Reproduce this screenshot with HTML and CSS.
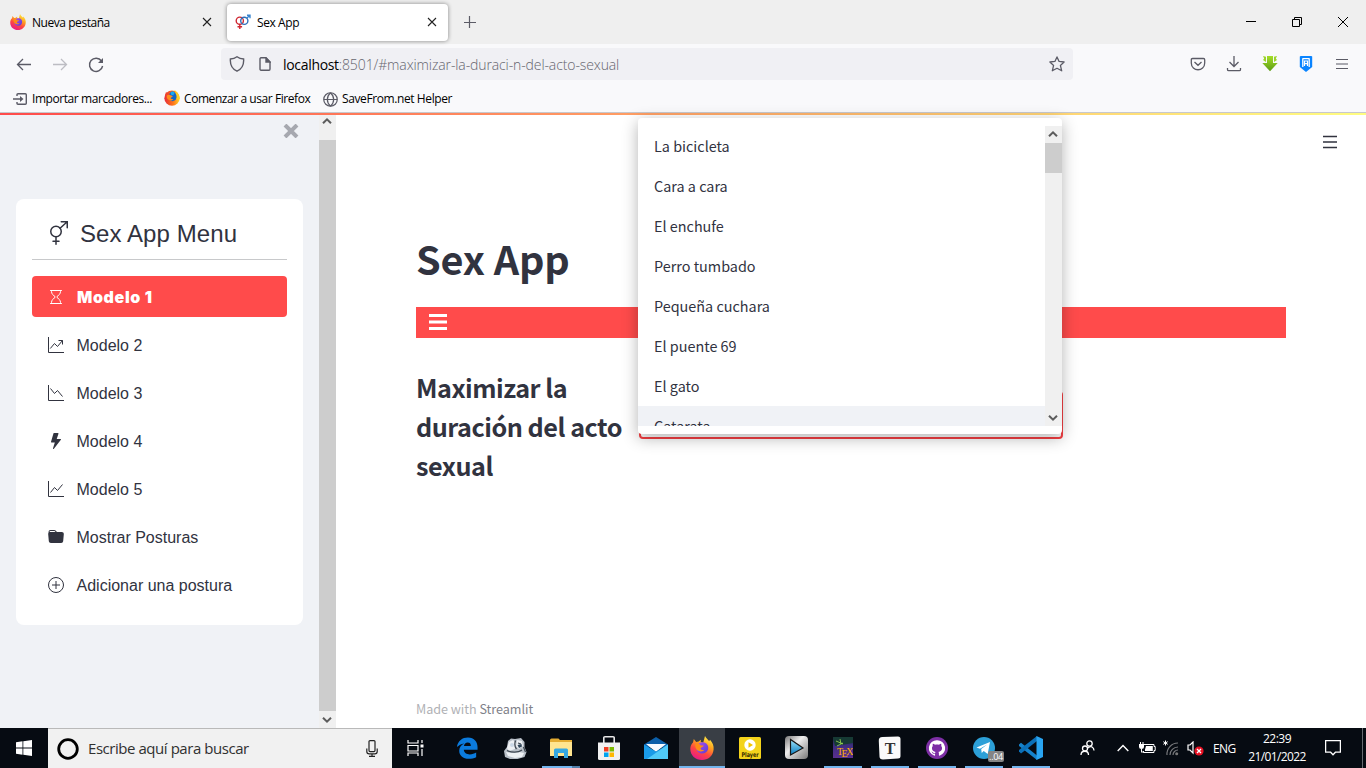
FILE: index.html
```html
<!DOCTYPE html>
<html lang="es">
<head>
<meta charset="utf-8">
<title>Sex App</title>
<link rel="stylesheet" href="styles.css">
</head>
<body>
<svg class="defs" width="0" height="0">
  <defs>
    <linearGradient id="ffBody" x1=".8" y1="0" x2=".3" y2="1"><stop offset="0" stop-color="#fff44f"/><stop offset=".35" stop-color="#ffa61e"/><stop offset=".65" stop-color="#ff4740"/><stop offset="1" stop-color="#e5198a"/></linearGradient>
    <linearGradient id="ffCore" x1="0" y1="0" x2="1" y2="1"><stop offset="0" stop-color="#a84df5"/><stop offset="1" stop-color="#5b3fd0"/></linearGradient>
    <linearGradient id="ffOld" x1="0" y1="0" x2="1" y2="0"><stop offset="0" stop-color="#e62b3a"/><stop offset=".6" stop-color="#ff7a18"/><stop offset="1" stop-color="#ffd52b"/></linearGradient>
    <linearGradient id="metal" x1="0" y1="0" x2="1" y2="1"><stop offset="0" stop-color="#777"/><stop offset=".4" stop-color="#eee"/><stop offset="1" stop-color="#777"/></linearGradient>
    <linearGradient id="play" x1="0" y1="0" x2="0" y2="1"><stop offset="0" stop-color="#9fe4fa"/><stop offset="1" stop-color="#087cc0"/></linearGradient>
    <linearGradient id="green" x1="0" y1="0" x2="0" y2="1"><stop offset="0" stop-color="#a5de28"/><stop offset="1" stop-color="#5c9c14"/></linearGradient>
    <linearGradient id="tex" x1="0" y1="0" x2="0" y2="1"><stop offset="0" stop-color="#173530"/><stop offset=".4" stop-color="#3d2c80"/><stop offset="1" stop-color="#5a2f8e"/></linearGradient>
    <symbol id="firefox" viewBox="0 0 24 24">
      <path fill="url(#ffBody)" d="M3 6.500 3.800 3l2.400 3 2.400-.4 2.200-1.800v2.300l2.400.6L15 0c1 2.300 3 3.500 4.200 5.300L20 3.700C22.600 6.600 24 9.700 23.600 13.500 23 20 18 24 12 24 5.500 24 .3 19.500.3 12.700.3 10.200 1.400 8 3 6.500z"/>
      <path fill="url(#ffCore)" d="M7 9.500C8.600 7 11.500 5.700 14.300 6.500c3.200 1 4.700 4.200 3.600 7.200-1 3-4.500 4.600-7.600 3.600C7.500 16.400 6 14 6.300 11.600z"/>
      <path fill="#ff8b16" d="M5.500 7.500c2-.8 4.500.2 5.200 2h3c-.2 1.700-2.700 1.500-3.200 2.700 0 1.600 1.600 2.200 3.800 1.600-1 2-5 2.200-7.300.2C5.300 12.200 5 9.700 5.500 7.500z"/>
    </symbol>
    <symbol id="firefoxOld" viewBox="0 0 24 24">
      <circle cx="12" cy="12.300" r="11.500" fill="url(#ffOld)"/>
      <path fill="#f0452b" d="M1.500 8 3 3l3.500 3.500L10 5v4z"/>
      <path fill="#ffce24" d="M15.500 0c5 3 8.500 8 8 14h-5C19 8 18 4 15.500 0z"/>
      <path fill="#1467c8" d="M8.500 5C10.500 2 14 1.500 16.500 4c3 3.500 3 9 0 11.500-3 2-7 1.500-8.500-1.500z"/>
      <path fill="#19a9f0" d="M10 3.500c2-1.800 4.500-1.500 6 .5l-2 4-3.500-1z"/>
      <path fill="#ff8f1c" d="M4 8.500c2-2 4.500-1.800 6-.5l3 1c0 2-2.500 1.800-3 3 .3 1.600 2 2 4 1.400-1.500 3-6 3-8.300.6C4.500 12.500 4 10.500 4 8.500z"/>
    </symbol>
    <symbol id="up" viewBox="0 0 10 8"><path d="M1 6.300 5 2.300l4 4" fill="none" stroke="#5c5c5c" stroke-width="2"/></symbol>
    <symbol id="down" viewBox="0 0 10 8"><path d="M1 1.700l4 4 4-4" fill="none" stroke="#5c5c5c" stroke-width="2"/></symbol>
    <symbol id="cross" viewBox="0 0 10 10"><path d="M1 1l8 8M9 1 1 9" fill="none" stroke="currentColor" stroke-width="1.100"/></symbol>
  </defs>
</svg>

<div class="screen">
  <header class="browser">
    <div class="tabs">
      <div class="tab">
        <svg class="fav" width="16" height="16"><use href="#firefox"/></svg>
        <span class="tab-title seg t-new">Nueva pestaña</span>
        <svg class="tab-x" width="10" height="10"><use href="#cross"/></svg>
      </div>
      <div class="tab tab-active">
        <svg class="fav" width="16" height="16" viewBox="0 0 16 16" fill="none"><circle cx="4.800" cy="6.700" r="3.600" stroke="#cf2630" stroke-width="1.400"/><path d="M4.800 10.300v4.700M2.500 12.700h4.600" stroke="#cf2630" stroke-width="1.400"/><circle cx="9.300" cy="6.800" r="3.600" stroke="#2d70bb" stroke-width="1.400"/><path d="M11.800 4.200 14.500 1.500M12 1.200h3v3" stroke="#3a86d0" stroke-width="1.400"/></svg>
        <span class="tab-title seg t-app">Sex App</span>
        <svg class="tab-x" width="10" height="10"><use href="#cross"/></svg>
      </div>
      <svg class="plus" width="12" height="12" viewBox="0 0 12 12"><path d="M5.500 0v12M0 6.500h12" stroke="#5b5b66" stroke-width="1.200"/></svg>
      <div class="win">
        <svg width="10" height="10" viewBox="0 0 10 10"><path d="M0 4.500h10" stroke="#000"/></svg>
        <svg width="10" height="10" viewBox="0 0 10 10" fill="none" stroke="#000"><path d="M.5 2.500h7v7h-7zM2.500 2.500v-2h7v7h-2"/></svg>
        <svg width="10" height="10" viewBox="0 0 10 10"><path d="M0 0l10 10M10 0 0 10" stroke="#000"/></svg>
      </div>
    </div>

    <div class="nav">
      <div class="nav-left">
        <svg width="16" height="16" viewBox="0 0 16 16" fill="none" stroke="#5b5b66" stroke-width="1.300"><path d="M15 7.500H1.500M7 2 1.500 7.500 7 13"/></svg>
        <svg width="16" height="16" viewBox="0 0 16 16" fill="none" stroke="#bdbdc3" stroke-width="1.300"><path d="M1 7.500h13.500M9 2l5.500 5.500L9 13"/></svg>
        <svg width="16" height="16" viewBox="0 0 16 16" fill="none" stroke="#5b5b66" stroke-width="1.400"><path d="M13.500 4A6.600 6.600 0 1 0 14.600 9"/><path d="M15 1v5h-5z" fill="#5b5b66" stroke="none"/></svg>
      </div>
      <div class="url">
        <svg width="16" height="16" viewBox="0 0 16 16" fill="none" stroke="#5b5b66" stroke-width="1.400"><path d="M8 .8c2 1.600 4.200 2.200 6.600 2.200C15 8 13 13 8 15.200 3 13 1 8 1.400 3 3.800 3 6 2.400 8 .8z"/></svg>
        <svg class="doc" width="12" height="14" viewBox="0 0 12 14" fill="none" stroke="#5b5b66" stroke-width="1.400"><path d="M1 2Q1 .8 2 .8h5L11 5v7q0 1.200-1 1.200H2Q1 13.200 1 12z"/><path d="M7 1v4h4z" fill="#5b5b66"/></svg>
        <span class="address"><span class="host">localhost</span>:8501/#maximizar-la-duraci-n-del-acto-sexual</span>
        <svg class="star" width="16" height="16" viewBox="0 0 16 16" fill="none" stroke="#5b5b66" stroke-width="1.300" stroke-linejoin="round"><path d="M8 .9l2.100 4.500 5 .6-3.700 3.400 1.300 5.400L8 12.300l-4.700 2.500 1.300-5.400L.9 6l5-.6z"/></svg>
      </div>
      <div class="nav-right">
        <svg width="16" height="16" viewBox="0 0 16 16" fill="none" stroke="#5b5b66" stroke-width="1.300"><path d="M2.500 2.500h11q1.200 0 1.200 1.200V7c0 9-13.400 9-13.400 0V3.700q0-1.200 1.200-1.200zM4.500 6 8 9.300 11.500 6"/></svg>
        <svg width="16" height="16" viewBox="0 0 16 16" fill="none" stroke="#5b5b66" stroke-width="1.300"><path d="M8 0v10.500M3.500 6 8 10.500 12.500 6M1.500 12v1.500q0 1.200 1.200 1.200h10.600q1.200 0 1.200-1.200V12"/></svg>
        <svg width="16" height="16" viewBox="0 0 16 16"><path fill="url(#green)" d="M5 0h6v7h4.700L8 15.300.3 7H5z"/><path fill="#9bd32a" d="M1 0l3 .8V6L1 4l1.200-1.500zM15 0l-3 .8V6l3-2-1.200-1.500z"/></svg>
        <svg width="16" height="16" viewBox="0 0 16 16"><path fill="#0a84ff" d="M2.500 0h11l.7.700V11L8 16l-6.200-5V.700z"/><path d="M4.800 11V2.200M11.200 11V2.200M4.800 2.700h6.400" stroke="#fff" stroke-width="1.300" fill="none"/><path d="M6.500 10V5h3v5M6.500 7.700h3" stroke="#fff" stroke-width="1.200" fill="none"/></svg>
        <svg width="12" height="12" viewBox="0 0 12 12"><path d="M0 1.500h12M0 6h12M0 10.500h12" stroke="#5b5b66" stroke-width="1.200"/></svg>
      </div>
    </div>

    <div class="marks seg">
      <svg width="14" height="12" viewBox="0 0 14 12" fill="none" stroke="#5b5b66" stroke-width="1.400"><path d="M4 3V1.700Q4 .7 5 .7h7.300q1 0 1 1v8.600q0 1-1 1H5q-1 0-1-1V9M0 6h8"/><path d="M7 3l3.500 3L7 9z" fill="#5b5b66" stroke="none"/></svg>
      <span class="m-one">Importar marcadores...</span>
      <svg class="old" width="16" height="16"><use href="#firefoxOld"/></svg>
      <span class="m-two">Comenzar a usar Firefox</span>
      <svg width="15" height="15" viewBox="0 0 16 16" fill="none" stroke="#5b5b66" stroke-width="1.300"><circle cx="8" cy="8" r="7.200"/><path d="M.8 8h14.400M8 .8C3.500 5 3.500 11 8 15.200M8 .8c4.500 4.200 4.500 10.200 0 14.400"/></svg>
      <span class="m-three">SaveFrom.net Helper</span>
    </div>
  </header>

  <div class="stripe"></div>

  <div class="page">
    <aside class="side">
      <div class="side-top">
        <svg width="16" height="14" viewBox="0 0 16 14"><path d="M2 1l12 12M14 1 2 13" stroke="#a6a8af" stroke-width="4"/></svg>
      </div>
      <nav class="menu">
        <div class="menu-title">
          <svg width="24" height="24" viewBox="0 0 16 16" fill="none" stroke="#31333f" stroke-linecap="round"><circle cx="8" cy="7" r="3.500"/><path d="M8 10.500v5M6 13.500h4M10.700 4.800 15.300.7M11.500.5h4v4"/></svg>
          <span>Sex App Menu</span>
        </div>
        <ul>
          <li class="on"><svg width="16" height="16" viewBox="0 0 16 16" fill="none" stroke="currentColor" stroke-linecap="round"><path d="M2.500 1.500h11M2.500 14.500h11M3.500 1.500v1c0 2.500 2 4 3.500 5v1c-1.500 1-3.500 2.500-3.500 5v1M12.500 1.500v1c0 2.500-2 4-3.500 5v1c1.500 1 3.500 2.500 3.500 5v1"/></svg><span>Modelo 1</span></li>
          <li><svg width="16" height="16" viewBox="0 0 16 16" fill="none" stroke="currentColor"><path d="M.5 0v15.500H16M2.300 11.500l4.200-5 3 3 5-6M10.500 3.500h4v4"/></svg><span>Modelo 2</span></li>
          <li><svg width="16" height="16" viewBox="0 0 16 16" fill="none" stroke="currentColor"><path d="M.5 0v15.500H16M2.500 3.500l4 5 3-3 5 6"/></svg><span>Modelo 3</span></li>
          <li><svg width="16" height="16" viewBox="0 0 16 16" fill="currentColor"><path d="M5.520.36A.5.500 0 0 1 6 0h4a.5.500 0 0 1 .474.658L8.694 6H12.500a.5.500 0 0 1 .395.807l-7 9a.5.500 0 0 1-.873-.454L6.823 9.500H3.500a.5.500 0 0 1-.48-.64l2.500-8.500z"/></svg><span>Modelo 4</span></li>
          <li><svg width="16" height="16" viewBox="0 0 16 16" fill="none" stroke="currentColor"><path d="M.5 0v15.500H16M2.500 11.500l4-5 3 3 5-6"/></svg><span>Modelo 5</span></li>
          <li><svg width="16" height="16" viewBox="0 0 16 16" fill="currentColor"><path d="M9.828 3h3.982a2 2 0 0 1 1.992 2.181l-.637 7A2 2 0 0 1 13.174 14H2.825a2 2 0 0 1-1.991-1.819l-.637-7a2 2 0 0 1 .342-1.310L.500 3a2 2 0 0 1 2-2h3.672a2 2 0 0 1 1.414.586l.828.828A2 2 0 0 0 9.828 3zm-8.322.120C1.720 3.042 1.950 3 2.190 3h5.396l-.707-.707A1 1 0 0 0 6.172 2H2.500a1 1 0 0 0-1 .981l.006.139z"/></svg><span>Mostrar Posturas</span></li>
          <li><svg width="16" height="16" viewBox="0 0 16 16" fill="none" stroke="currentColor"><circle cx="8" cy="8" r="7.500"/><path d="M8 4v8M4 8h8"/></svg><span>Adicionar una postura</span></li>
        </ul>
      </nav>
    </aside>
    <div class="side-scroll">
      <svg width="10" height="8"><use href="#up"/></svg>
      <div class="side-thumb"></div>
      <svg width="10" height="8"><use href="#down"/></svg>
    </div>

    <main class="main">
      <svg class="burger" width="14" height="14" viewBox="0 0 14 14"><path d="M0 1.500h14M0 7h14M0 12.500h14" stroke="#31333f" stroke-width="1.600"/></svg>
      <h1>Sex App</h1>
      <div class="bar"><svg width="18" height="16" viewBox="0 0 18 16"><path d="M0 1.500h18M0 8h18M0 14.500h18" stroke="#fff" stroke-width="3"/></svg></div>
      <div class="cols">
        <h2>Maximizar la duración del acto sexual</h2>
        <div class="select"></div>
      </div>
      <footer>Made with <span>Streamlit</span></footer>

      <div class="drop">
        <ul class="options">
          <li>La bicicleta</li><li>Cara a cara</li><li>El enchufe</li><li>Perro tumbado</li><li>Pequeña cuchara</li><li>El puente 69</li><li>El gato</li><li class="hover">Catarata</li>
        </ul>
        <div class="drop-scroll">
          <svg width="10" height="8"><use href="#up"/></svg>
          <div class="drop-thumb"></div>
          <svg width="10" height="8"><use href="#down"/></svg>
        </div>
      </div>
    </main>
  </div>

  <div class="taskbar">
    <div class="start"><svg width="16" height="16" viewBox="0 0 16 16" fill="#fff"><path d="M0 2.200 6.500 1.300v6.200H0zM7.300 1.200 16 0v7.500H7.300zM0 8.400h6.500v6.300L0 13.800zM7.300 8.400H16V16l-8.700-1.200z"/></svg></div>
    <div class="search">
      <svg width="22" height="22" viewBox="0 0 22 22"><circle cx="11" cy="11" r="9.300" fill="none" stroke="#000" stroke-width="2.800"/></svg>
      <span class="seg">Escribe aquí para buscar</span>
      <svg class="mic" width="12" height="17" viewBox="0 0 12 17" fill="none" stroke="#222" stroke-width="1.200"><rect x="3" y=".6" width="6" height="11" rx="1"/><path d="M.8 8.500v3q0 2.300 2.300 2.300h5.800q2.300 0 2.300-2.300v-3M6 14v2.500M3 16.300h6"/></svg>
    </div>
    <div class="taskview"><svg width="18" height="16" viewBox="0 0 18 16" fill="none" stroke="#fff" stroke-width="1.200"><path d="M1 0v3h10V0M1 5.500h10v5.500H1zM1 16v-3h10v3M15 0v3M15 9v7"/><path d="M13.500 4.500h3v3h-3z" fill="#fff" stroke="none"/></svg></div>

    <div class="app edge"><svg width="22" height="22" viewBox="0 0 24 24"><path fill="#0b7bdd" d="M1 11C2 4 7 .5 13 .5c7 0 10.500 5 10.500 10.500v3h-15c.3 3.500 3 5 6.500 5 2.700 0 5-.7 7-2v5c-2.500 1.300-5 1.800-8 1.800C7.500 23.800 3.500 20 3.500 15c0-3.500 2-6.300 5.500-8C5.500 7.500 3 9 1 11zM8.700 9.700h7.500c0-2.400-1.200-3.700-3.400-3.700-2.300 0-3.700 1.500-4.100 3.700z"/></svg></div>
    <div class="app"><svg width="24" height="22" viewBox="0 0 24 22"><path fill="#b9c0c8" d="M5 4 8 1.500l4 .5 6-1 3.500 4v5l2 5-2 5-7 2H7l-5-2-1-6 3-4z"/><path fill="#eef1f4" d="M6 5l4-2 3 3-1 6-6 2-2-3zM14 3l5 1 1 5-4 3-3-3zM3 15l6 1 7-1 5 1-2 4-7 1-7-2z"/><path fill="none" stroke="#3d4650" stroke-width="1.300" d="M12.500 3.500c-1 3-1 6 1 8.500M15 6l3 1M4 13.500c4 2 11 2.500 15-.5M20.500 10l2 5"/><path fill="#2e4458" d="M14.500 8l4-1 .5 2.500-3 1.500z"/><circle cx="9" cy="8" r="2" fill="#cbd8e6"/></svg></div>
    <div class="app run two"><svg width="22" height="20" viewBox="0 0 22 20"><path fill="#e4ac32" d="M0 2q0-1.500 1.500-1.500h7L10 2h12v6H0z"/><path fill="#ffe590" d="M0 4h22v14H0z"/><path fill="#36a8e1" d="M4 20v-8q0-1.500 1.500-1.500h11Q18 10.500 18 12v8h-4v-5H8v5z"/></svg></div>
    <div class="app"><svg width="24" height="24" viewBox="0 0 24 24"><path fill="none" stroke="#e8e8e8" stroke-width="1.600" d="M6.800 7V1.600Q6.800.8 8 .8h8q1.200 0 1.200.8V7"/><path fill="#f1f1f1" d="M1 6.500h22v16q0 1.500-1.500 1.500h-19Q1 24 1 22.500z"/><path fill="#f03e22" d="M7 11h4.500v4.500H7z"/><path fill="#7cb900" d="M12.500 11H17v4.500h-4.500z"/><path fill="#00a3ee" d="M7 16.500h4.500V21H7z"/><path fill="#ffb800" d="M12.500 16.500H17V21h-4.500z"/></svg></div>
    <div class="app"><svg width="24" height="22" viewBox="0 0 24 22"><path fill="#0b5fa9" d="M0 7.500 12 0l12 7.500v3H0z"/><path fill="#f6fbff" d="M2 7h20l-10 8z"/><path fill="#1a9be8" d="M0 7.500l12 7 12-7V22H0z"/><path fill="#50caf8" d="M24 7.500 3 22h21z"/></svg></div>
    <div class="app current"><svg width="24" height="24"><use href="#firefox"/></svg></div>
    <div class="app"><svg width="22" height="22" viewBox="0 0 22 22"><rect width="22" height="22" rx="1.500" fill="#f3d31b"/><circle cx="11" cy="8" r="5.700" fill="#fff"/><path d="M9.500 5.300v5.400L14 8z" fill="#f0c500"/><text class="player" x="11" y="20" text-anchor="middle" textLength="17" lengthAdjust="spacingAndGlyphs">Player</text></svg></div>
    <div class="app"><svg width="23" height="23" viewBox="0 0 23 23"><rect width="23" height="23" rx="4" fill="url(#metal)"/><path d="M5.500 3.500v15.500L18 12z" fill="url(#play)" stroke="#181818" stroke-width="1.200"/></svg></div>
    <div class="app run"><svg width="20" height="21" viewBox="0 0 20 21"><rect width="20" height="21" fill="url(#tex)"/><path d="M0 0h20v6L2 9z" fill="#163a34"/><path d="M3 4l7 3M7 2l1 5M4 9l6-3" stroke="#9fde50" stroke-width=".8"/><text class="tex" x="4" y="18">T<tspan dy="2">E</tspan><tspan dy="-2">X</tspan></text></svg></div>
    <div class="app run"><svg width="24" height="24" viewBox="0 0 24 24"><path d="M4.500 1 20 .5q2.500 0 2.500 2.500v17q0 2.500-2.500 2.500L5 23.500q-3.500 0-3.500-3L.8 5Q.5 1 4.500 1z" fill="#fafafa"/><text class="typo" x="12" y="17.500" text-anchor="middle">T</text></svg></div>
    <div class="app run"><svg width="22" height="22" viewBox="0 0 24 24"><circle cx="12" cy="12" r="12" fill="#7d2fa5"/><path fill="#fff" d="M12 3.500a8.700 8.700 0 0 0-2.800 17c.5 0 .7-.2.700-.5v-1.700c-2.400.5-3-1-3.300-1.600l-.8-1c1-.1 1.700 1 1.900 1.200.7 1 1.600.8 2.200.6.100-.6.300-.9.600-1.200-2.300-.3-4-1.200-4-4.200 0-1 .3-1.800.9-2.400-.2-.5-.3-1.300.1-2.300.9 0 1.600.5 2.300 1 1.400-.4 3-.4 4.400 0 .7-.5 1.400-1 2.300-1 .4 1 .3 1.800.1 2.300.6.600.9 1.400.9 2.400 0 3-1.700 3.900-4 4.200.4.300.6.900.6 1.700V20c0 .3.200.5.700.5A8.700 8.700 0 0 0 12 3.500z"/></svg></div>
    <div class="app run"><svg width="22" height="22" viewBox="0 0 22 22"><circle cx="11" cy="11" r="11" fill="#2ca0d8"/><path fill="#fff" d="M3.500 10.500 17 5l-2.300 12-4-3-2 2-.5-4 6-4.500-7.300 4.300z"/></svg><span class="badge seg">..04</span></div>
    <div class="app run"><svg width="24" height="24" viewBox="0 0 24 24"><path fill="#1582cb" d="M0 8.500 2 6.700l16 12.800V24L0 10z"/><path fill="#0b70b8" d="M0 15.500 2 17.500 18 5V0L0 14z"/><path fill="#29a5f2" d="M17.500 0 24 3v18l-6.500 3z"/></svg></div>

    <div class="tray">
      <div class="people"><svg width="15" height="16" viewBox="0 0 15 16" fill="none" stroke="#fff" stroke-width="1.300"><circle cx="9.500" cy="3.500" r="2.700"/><circle cx="5" cy="8.500" r="2.500"/><path d="M1 15c0-5 7.500-5 7.500 0M8 8c3-3 6-.5 6 2.500"/></svg></div>
      <div class="chev"><svg width="12" height="8" viewBox="0 0 12 8"><path d="M.7 7 6 1.500 11.300 7" fill="none" stroke="#fff" stroke-width="1.400"/></svg></div>
      <div class="batt"><svg width="17" height="12" viewBox="0 0 17 12"><path d="M5 2.500h10v2h1.200v4H15v2H4.500V9" fill="none" stroke="#fff"/><path d="M7 4h6.800v5H6V7.500zM0 2h5v3q0 2-2.500 2T0 5zM1 0h1v2H1zM3.500 0h1v2h-1zM2 7h1v2.500h2v1H2z" fill="#fff"/></svg></div>
      <div class="wifi"><svg width="16" height="16" viewBox="0 0 16 16" fill="none"><path d="M2.500.5v5M.3 1.700l4.400 2.600M4.700 1.700.3 4.300" stroke="#fff"/><path d="M4 15A11 11 0 0 1 15 3M7 15a8 8 0 0 1 8-8M10 15a5 5 0 0 1 5-5" stroke="#77797c" stroke-width="1.200"/><circle cx="13.700" cy="13.800" r="1.500" fill="#777"/></svg></div>
      <div class="vol"><svg width="17" height="15" viewBox="0 0 17 15"><path d="M1 4h2l3-3v11L3 9H1z" fill="none" stroke="#fff" stroke-width="1.200"/><circle cx="12" cy="10" r="4.600" fill="#e81123"/><path d="M10 8l4 4M14 8l-4 4" stroke="#fff" stroke-width="1.300"/></svg></div>
      <div class="lang seg">ENG</div>
      <div class="clock seg"><span class="time">22:39</span><span class="date">21/01/2022</span></div>
      <div class="note"><svg width="16" height="16" viewBox="0 0 16 16"><path d="M.6.700h14.800v11.500h-5L8 14.800l-2.400-2.600h-5z" fill="none" stroke="#fff" stroke-width="1.300"/></svg></div>
      <div class="peek"></div>
    </div>
  </div>
</div>
</body>
</html>
```
FILE: styles.css
```css
* { box-sizing: border-box; }
body { margin: 0; overflow: hidden; }
svg { display: block; flex: none; }
.defs { position: absolute; }
ul { list-style: none; margin: 0; padding: 0; }
.seg { font-family: "Open Sans", "Noto Sans", sans-serif; white-space: nowrap; }
.screen { width: 1366px; height: 768px; display: flex; flex-direction: column; background: #fff; overflow: hidden; }

/* Browser chrome */
.browser { height: 112px; background: #f9f9fb; flex: none; }
.tabs { height: 44px; background: #efefef; display: flex; align-items: center; padding-left: 2px; }
.tab { width: 221px; height: 37px; display: flex; align-items: center; padding: 0 11px 0 8px; margin-right: 4px; border-radius: 4px; font-size: 12px; color: #15141a; }
.tab-active { background: #fff; box-shadow: 0 0 4px rgba(0,0,0,.45); margin-right: 16px; }
.tab-title { margin-left: 6px; flex: 1; line-height: 16px; padding-top: 1px; color: #000; }
.t-new { letter-spacing: -.45px; }
.t-app { letter-spacing: -.42px; }
.tab-x { color: #222; }
.win { margin-left: auto; display: flex; gap: 36px; padding-right: 18px; }
.nav { height: 40px; padding-top: 4px; display: flex; }
.nav-left { width: 221px; display: flex; gap: 20px; padding: 9px 0 0 16px; }
.url { width: 852px; height: 32px; border-radius: 4px; background: #f0f0f4; display: flex; align-items: center; padding: 0 8px; }
.doc { margin-left: 14px; }
.address { font: 300 14px/20px "Open Sans", sans-serif; letter-spacing: -.11px; color: #65656e; margin-left: 12px; padding-top: 2px; flex: 1; white-space: nowrap; }
.host { color: #000; font-weight: 400; letter-spacing: -.32px; }
.nav-right { margin-left: auto; display: flex; gap: 20px; padding: 8px 18px 0 0; }
.nav-right svg:last-child { margin: 2px 0 0 2px; }
.marks { height: 28px; display: flex; align-items: center; padding: 2px 0 0 13px; font-size: 12px; color: #000; }
.marks span { line-height: 16px; }
.m-one { width: 120px; margin: 0 12px 0 5px; letter-spacing: -.43px; }
.m-two { width: 127px; margin: 0 12px 0 4px; letter-spacing: -.43px; }
.m-three { margin-left: 4px; letter-spacing: -.4px; }
.old { margin-top: -2px; }

.stripe { height: 3px; flex: none; border-top: 1px solid #c7c8cd; background: linear-gradient(90deg, #ff4b4b, #fffd80); }

/* Page */
.page { height: 613px; display: flex; flex: none; }
.side { width: 319px; background: #f0f2f6; padding: 9px 16px 0; }
.side-top { height: 75px; display: flex; justify-content: flex-end; padding-right: 4px; }
.menu { width: 287px; height: 426px; background: #fff; border-radius: 8px; padding: 8px 16px; font: 16px "Liberation Sans", Arial, sans-serif; color: #31333f; }
.menu-title { height: 53px; border-bottom: 1px solid #c8c9cb; display: flex; align-items: center; padding-left: 12px; font-size: 24px; margin-bottom: 16px; }
.menu-title span { margin-left: 12px; padding-top: 2px; letter-spacing: .08px; }
.menu-title svg { margin-top: -1px; }
.menu li { height: 41px; margin-bottom: 7px; display: flex; align-items: center; padding-left: 16px; border-radius: 4px; }
.menu li span { margin-left: 12.500px; padding-top: 3px; }
.menu li svg { margin-top: 1px; }
.menu .on { background: #ff4b4b; color: #fff; }
.menu .on span { font-family: Inter, sans-serif; font-size: 16px; font-weight: 900; letter-spacing: .65px; margin-left: 13px; padding-top: 1px; }
.side-scroll { width: 17px; background: #f0f0f0; display: flex; flex-direction: column; align-items: flex-start; padding: 2px 0 4px; }
.side-scroll svg, .drop-scroll svg { margin-left: 3px; }
.side-thumb { width: 17px; height: 571px; margin: 15px 0 auto; background: #cdcdcd; }
.main { position: relative; width: 1030px; height: 613px; padding: 0 80px; font-family: "Noto Sans CJK JP", "Noto Sans", sans-serif; color: #31333f; display: flex; flex-direction: column; }
.burger { align-self: flex-end; margin: 20px -51px 0 0; }
h1 { font-size: 39.600px; line-height: 52px; font-weight: 700; margin: 83px 0 23px; height: 52px; letter-spacing: -.15px; }
.bar { height: 31px; background: #ff4b4b; padding: 7px 0 0 13px; margin-bottom: 30px; }
.cols { display: flex; height: 331px; }
h2 { width: 223px; margin: 0; font-size: 25.200px; line-height: 39px; font-weight: 700; letter-spacing: -.48px; }
.select { width: 424px; height: 48px; margin-top: 23px; border: 2px solid #f63f43; border-radius: 4px; }
footer { font-size: 12.600px; line-height: 20px; color: #b0b1b5; letter-spacing: -.03px; }
footer span { color: #808189; }

.drop { position: absolute; left: 302px; top: 3px; width: 424px; height: 316px; padding: 8px 0; background: #fff; border-radius: 4px; box-shadow: 0 4px 16px rgba(0,0,0,.3); display: flex; }
.options { width: 407px; height: 300px; overflow: hidden; font-size: 14.400px; }
.options li { height: 40px; line-height: 40px; padding-left: 16px; }
.options .hover { background: #f0f2f6; }
.drop-scroll { width: 17px; height: 300px; background: #f0f0f0; display: flex; flex-direction: column; align-items: flex-start; padding: 4px 0; }
.drop-thumb { width: 17px; height: 30px; background: #cdcdcd; margin: 5px 0 auto; }

/* Taskbar */
.taskbar { height: 40px; background: #060b12; display: flex; flex: none; }
.start { width: 48px; display: flex; justify-content: center; align-items: center; }
.search { width: 344px; background: #f1f1f1; border-top: 1px solid #b9b9b9; display: flex; align-items: center; padding: 0 14px 0 9px; font-size: 15px; color: #303030; }
.search span { margin: -2px 0 0 9px; flex: 1; letter-spacing: -.45px; }
.taskview { width: 52px; padding: 12px 0 0 15px; }
.app { width: 47px; height: 40px; display: flex; align-items: center; justify-content: center; position: relative; border-bottom: 2px solid transparent; padding-top: 1px; }
.edge { padding-right: 2px; }
.run { width: 38px; margin: 0 5px 0 4px; border-color: #72b4ed; }
.two { border-image: linear-gradient(90deg, #72b4ed 76%, #527fa9 76%) 2; border-width: 0 0 2px; }
.current { width: 46px; margin-right: 1px; background: #393e45; border-color: #72b4ed; }
.badge { position: absolute; right: -1px; bottom: 4px; width: 16px; height: 11px; border-radius: 2px; background: #858585; color: #fff; font-size: 9px; line-height: 11px; text-align: center; letter-spacing: -.3px; }
.player { font: bold 6.500px "DejaVu Sans", sans-serif; fill: #332a00; }
.tex { font: 10px "Liberation Serif", serif; fill: #ffb000; letter-spacing: -1.500px; }
.typo { font: bold 16px "Liberation Serif", serif; fill: #333; }
.tray { margin-left: auto; display: flex; align-items: center; height: 40px; color: #fff; font-size: 12px; }
.people { width: 37px; }
.chev { width: 22px; }
.batt { width: 24px; }
.wifi { width: 24px; }
.vol { width: 26px; }
.lang { width: 32px; letter-spacing: -.55px; }
.clock { width: 64px; display: flex; flex-direction: column; align-items: center; line-height: 18px; margin-right: 16px; }
.time { letter-spacing: -.5px; }
.date { letter-spacing: -.6px; }
.note { width: 37px; }
.peek { width: 4px; height: 40px; border-left: 1px solid #666a70; }
```
